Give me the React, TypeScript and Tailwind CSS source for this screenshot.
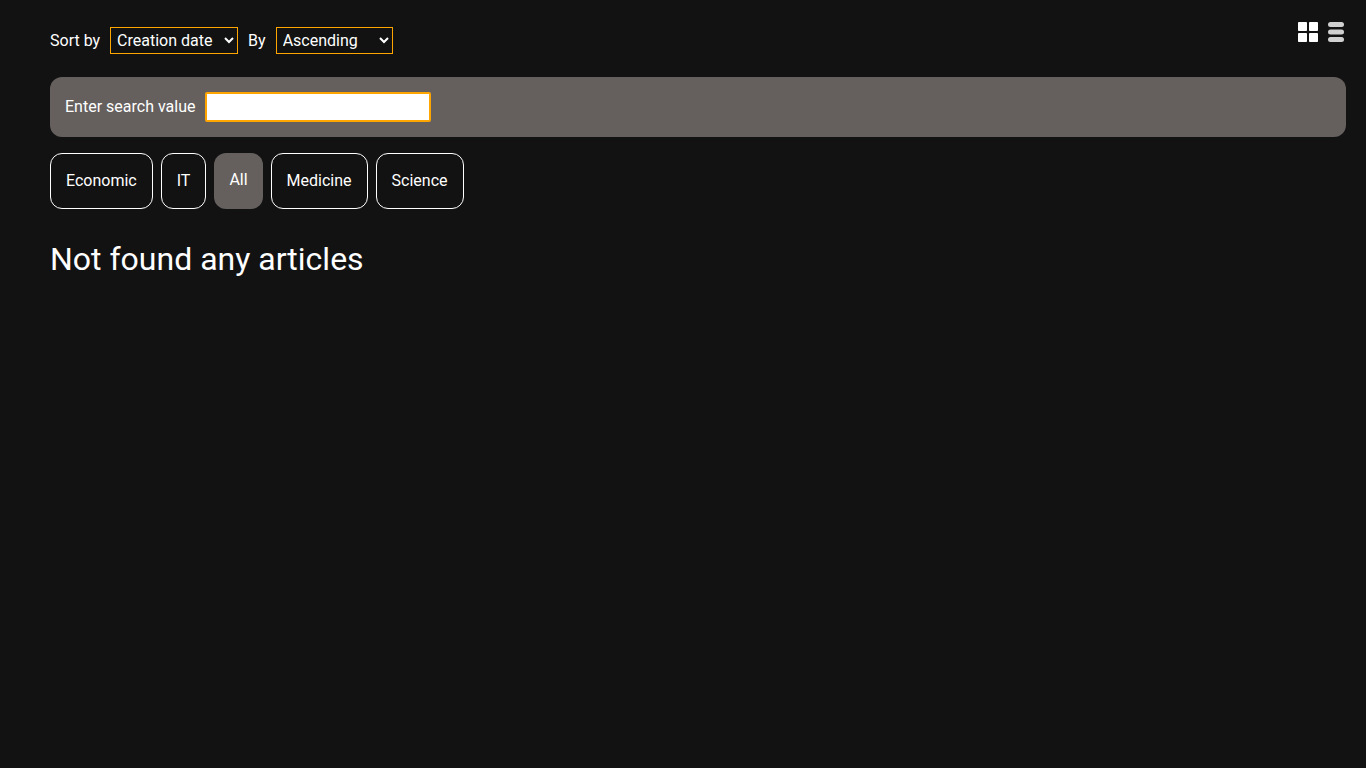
const categories = ['Economic', 'IT', 'All', 'Medicine', 'Science'];

export default function App() {
  const active = 'All';
  return (
    <main className="min-h-screen bg-[#121212] py-5 pr-5 pl-[50px] font-[Roboto,sans-serif] text-base leading-6 text-white">
      <header className="flex items-start justify-between">
        <div className="flex items-center gap-2.5 pt-[7px]">
          <label htmlFor="sort-field">Sort by</label>
          <select
            id="sort-field"
            defaultValue="created"
            className="h-[27px] w-32 border border-solid border-[#ffa500] bg-[#121212] px-0.5 text-white"
          >
            <option value="created">Creation date</option>
            <option value="title">Title</option>
            <option value="views">Views</option>
          </select>
          <label htmlFor="sort-order">By</label>
          <select
            id="sort-order"
            defaultValue="asc"
            className="h-[27px] w-[117px] border border-solid border-[#ffa500] bg-[#121212] px-0.5 text-white"
          >
            <option value="asc">Ascending</option>
            <option value="desc">Descending</option>
          </select>
        </div>
        <div className="flex gap-2.5 pt-0.5">
          <button type="button" aria-label="Grid view">
            <svg width="20" height="20" viewBox="0 0 20 20" fill="#fff">
              <rect width="9" height="9" rx="0.8" />
              <rect x="11" width="9" height="9" rx="0.8" />
              <rect y="11" width="9" height="9" rx="0.8" />
              <rect x="11" y="11" width="9" height="9" rx="0.8" />
            </svg>
          </button>
          <button type="button" aria-label="List view">
            <svg width="18" height="20" viewBox="0 0 18 20" fill="#d0d0d0">
              <rect width="16" height="5" rx="2.5" />
              <rect y="7.5" width="16" height="5" rx="2.5" />
              <rect y="15" width="16" height="5" rx="2.5" />
            </svg>
          </button>
        </div>
      </header>

      <section className="mt-[23px] flex items-center gap-2.5 rounded-xl bg-[#65605e] p-[15px]">
        <label htmlFor="search">Enter search value</label>
        <input
          id="search"
          type="text"
          className="h-[30px] w-[226px] rounded-xs border-2 border-[#ffa500] bg-white px-1 text-black outline-none"
        />
      </section>

      <nav className="mt-4 flex gap-2">
        {categories.map((name) => (
          <button
            key={name}
            type="button"
            aria-pressed={name === active}
            className={
              name === active
                ? 'rounded-xl bg-[#65605e] px-[15px] pt-[15px] pb-[17px]'
                : 'rounded-xl border border-white p-[15px]'
            }
          >
            {name}
          </button>
        ))}
      </nav>

      <h1 className="mt-[30px] text-[32px] leading-10">Not found any articles</h1>
    </main>
  );
}
